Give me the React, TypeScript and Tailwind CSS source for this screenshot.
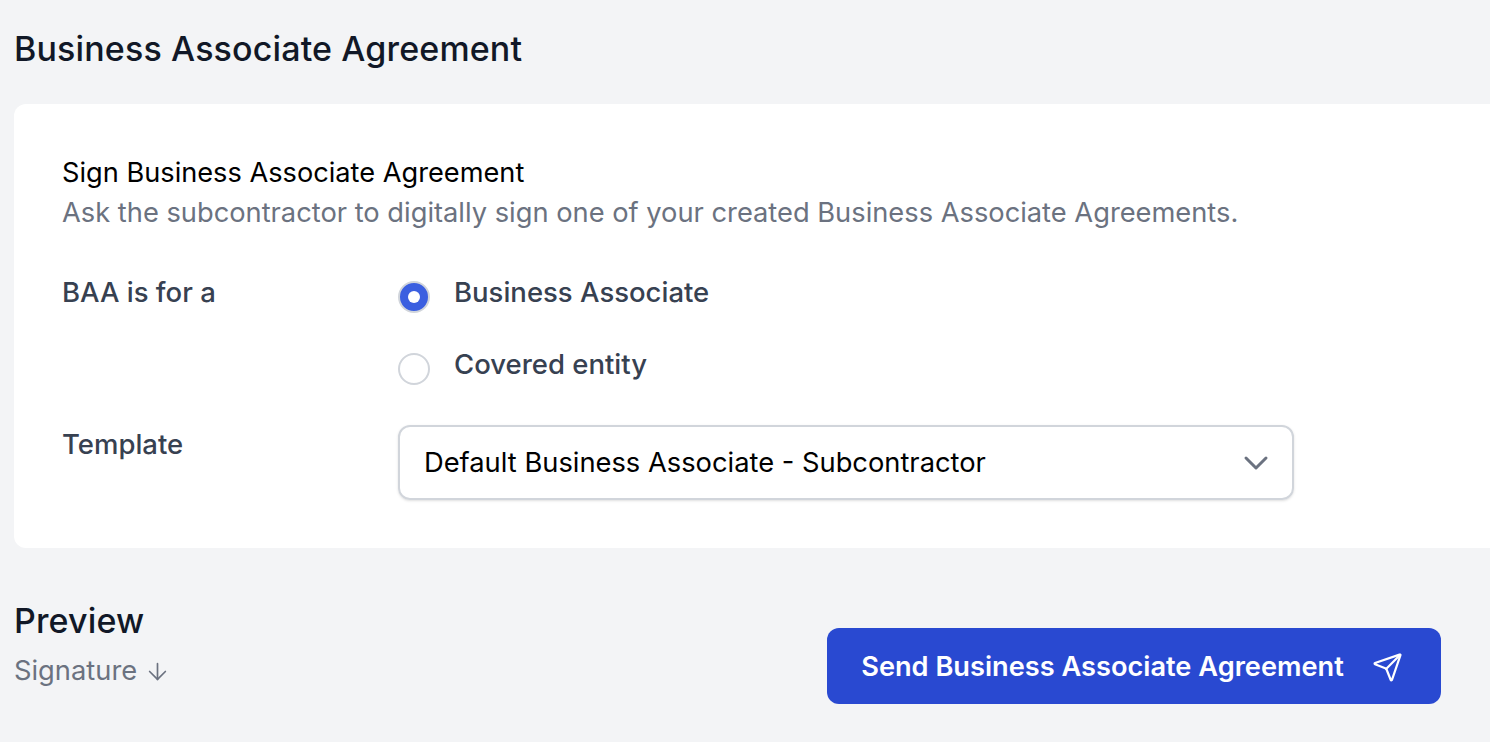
import { ChevronDown, ArrowDown, Send } from "lucide-react";

export default function App() {
  return (
    <div className="min-h-screen overflow-hidden bg-[#f3f4f6] pl-[14px] font-['Inter',sans-serif]">
      <h1 className="pt-[28px] text-[34px] leading-[42px] font-medium tracking-[0.14px] text-[#111827]">
        Business Associate Agreement
      </h1>

      <div className="mt-[34px] h-[444px] w-[1500px] rounded-l-[12px] bg-white pt-[53px] pl-[48px]">
        <h2 className="text-[27.2px] leading-[32px] text-black">Sign Business Associate Agreement</h2>
        <p className="mt-[8px] text-[27.28px] leading-[32px] text-[#6b7280]">
          Ask the subcontractor to digitally sign one of your created Business Associate Agreements.
        </p>

        <div className="mt-[44px] flex">
          <div className="h-[40px] w-[336px] text-[27.5px] leading-[38px] font-medium text-[#374151]">BAA is for a</div>
          <div className="flex flex-col gap-[32px]">
            <label className="flex h-[40px] items-start gap-[24px] text-[27.5px] leading-[38px] font-medium text-[#374151]">
              <span className="mt-[8px] flex h-[32px] w-[32px] items-center justify-center rounded-full border-2 border-[#d1d5db] bg-[#3b5fe0]">
                <span className="h-[12px] w-[12px] rounded-full bg-white" />
              </span>
              Business Associate
            </label>
            <label className="flex h-[40px] items-start gap-[24px] text-[27.5px] leading-[38px] font-medium text-[#374151]">
              <span className="mt-[8px] h-[32px] w-[32px] rounded-full border-2 border-[#d1d5db] bg-white" />
              Covered entity
            </label>
          </div>
        </div>

        <div className="mt-[40px] flex">
          <div className="h-[40px] w-[336px] text-[27.5px] leading-[38px] font-medium text-[#374151]">Template</div>
          <div className="flex h-[75px] w-[896px] items-center justify-between rounded-[12px] border-2 border-[#d1d5db] pr-[16px] pl-[24px] text-[27.3px] text-black shadow-sm">
            <span className="pt-[2px]">Default Business Associate - Subcontractor</span>
            <ChevronDown className="h-[40px] w-[40px] text-[#6b7280]" strokeWidth={1.8} />
          </div>
        </div>
      </div>

      <div className="mt-[49px] flex items-start justify-between pr-[49px]">
        <div>
          <h2 className="text-[34px] leading-[48px] font-medium tracking-[0.14px] text-[#111827]">Preview</h2>
          <div className="mt-[6px] flex items-center gap-[7px] text-[27.3px] leading-[40px] text-[#6b7280]">
            Signature
            <ArrowDown className="h-[27px] w-[27px]" strokeWidth={1.5} />
          </div>
        </div>
        <button className="mt-[31px] flex h-[76px] w-[614px] items-center justify-center gap-[28px] rounded-[12px] bg-[#2949d1] pt-[2px] pr-[4px] text-[27.2px] font-semibold text-white">
          Send Business Associate Agreement
          <Send className="h-[31px] w-[31px]" strokeWidth={1.7} />
        </button>
      </div>
    </div>
  );
}
